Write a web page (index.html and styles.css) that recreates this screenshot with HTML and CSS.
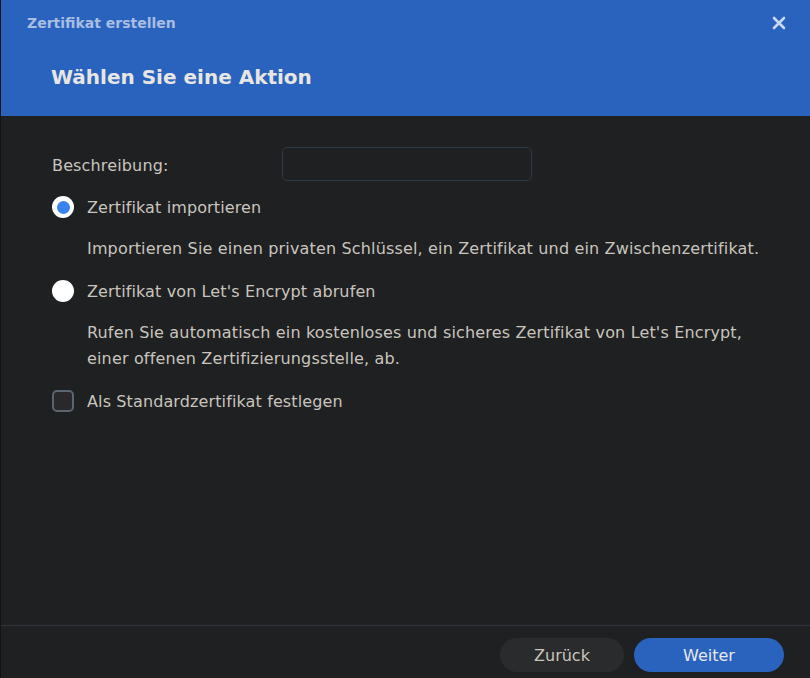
FILE: index.html
```html
<!DOCTYPE html>
<html lang="de">
<head>
<meta charset="utf-8">
<title>Zertifikat erstellen</title>
<link rel="stylesheet" href="styles.css">
</head>
<body>
<div class="dialog">
  <header class="header">
    <div class="header-top">
      <span class="window-title">Zertifikat erstellen</span>
      <svg class="close" width="14" height="14" viewBox="0 0 14 14"><path d="M2 2 L12 12 M12 2 L2 12" stroke="#c9d8f0" stroke-width="2.6" stroke-linecap="round"/></svg>
    </div>
    <h1 class="heading">Wählen Sie eine Aktion</h1>
  </header>
  <main class="content">
    <div class="field-row">
      <label class="field-label">Beschreibung:</label>
      <div class="input"></div>
    </div>
    <div class="option">
      <span class="radio checked"></span>
      <span class="option-label">Zertifikat importieren</span>
    </div>
    <p class="desc">Importieren Sie einen privaten Schlüssel, ein Zertifikat und ein Zwischenzertifikat.</p>
    <div class="option">
      <span class="radio"></span>
      <span class="option-label">Zertifikat von Let's Encrypt abrufen</span>
    </div>
    <p class="desc">Rufen Sie automatisch ein kostenloses und sicheres Zertifikat von Let's Encrypt, einer offenen Zertifizierungsstelle, ab.</p>
    <div class="option">
      <span class="checkbox"></span>
      <span class="option-label">Als Standardzertifikat festlegen</span>
    </div>
  </main>
  <footer class="footer">
    <button class="btn btn-secondary">Zurück</button>
    <button class="btn btn-primary">Weiter</button>
  </footer>
</div>
</body>
</html>
```
FILE: styles.css
```css
* { box-sizing: border-box; }
html, body { margin: 0; padding: 0; }
body {
  background: #1f2022;
  font-family: "DejaVu Sans", Verdana, sans-serif;
  color: #c9c5be;
}
.dialog {
  width: 810px;
  height: 678px;
  display: flex;
  flex-direction: column;
  border-left: 1px solid #121314;
}
.header {
  height: 116px;
  background: #2a63bd;
  padding: 13px 24px 0 26px;
}
.header-top {
  display: flex;
  justify-content: space-between;
  align-items: center;
  height: 20px;
}
.window-title {
  font-weight: bold;
  font-size: 14px;
  color: #a8bee3;
}
.heading {
  margin: 32px 0 0 24px;
  font-size: 20px;
  font-weight: bold;
  color: #e8e6e3;
}
.content {
  flex: 1;
  padding: 31px 40px 0 51px;
}
.field-row {
  display: flex;
  align-items: center;
  height: 34px;
  font-size: 16px;
  letter-spacing: 0.15px;
}
.field-label {
  width: 230px;
  padding-top: 2px;
}
.input {
  width: 250px;
  height: 34px;
  border: 1px solid #2d3a47;
  border-radius: 5px;
  background: #1f2022;
}
.option {
  display: flex;
  align-items: center;
  gap: 13px;
  height: 22px;
}
.field-row + .option { margin-top: 15px; }
.option-label { font-size: 16px; letter-spacing: 0.12px; }
.radio {
  width: 22px;
  height: 22px;
  border-radius: 50%;
  background: #ffffff;
  flex: none;
  display: flex;
  align-items: center;
  justify-content: center;
}
.radio.checked::after {
  content: "";
  width: 13px;
  height: 13px;
  border-radius: 50%;
  background: #3a82ec;
}
.checkbox {
  width: 22px;
  height: 22px;
  border: 2px solid #5b6570;
  border-radius: 5px;
  background: #29292b;
  flex: none;
}
.desc {
  margin: 18px 0 18px 35px;
  font-size: 16px;
  letter-spacing: 0.16px;
  line-height: 26px;
}
.footer {
  height: 53px;
  border-top: 1px solid #30363e;
  display: flex;
  justify-content: flex-end;
  align-items: flex-start;
  gap: 10px;
  padding: 12px 26px 0 0;
}
.btn {
  height: 34px;
  border: none;
  border-radius: 17px;
  font-family: "DejaVu Sans", Verdana, sans-serif;
  font-size: 16px;
  color: #c9c5be;
  padding: 0;
}
.btn-secondary { width: 124px; background: #2a2b2d; }
.btn-primary { width: 150px; background: #2a63bd; color: #e8e8ea; }
```
